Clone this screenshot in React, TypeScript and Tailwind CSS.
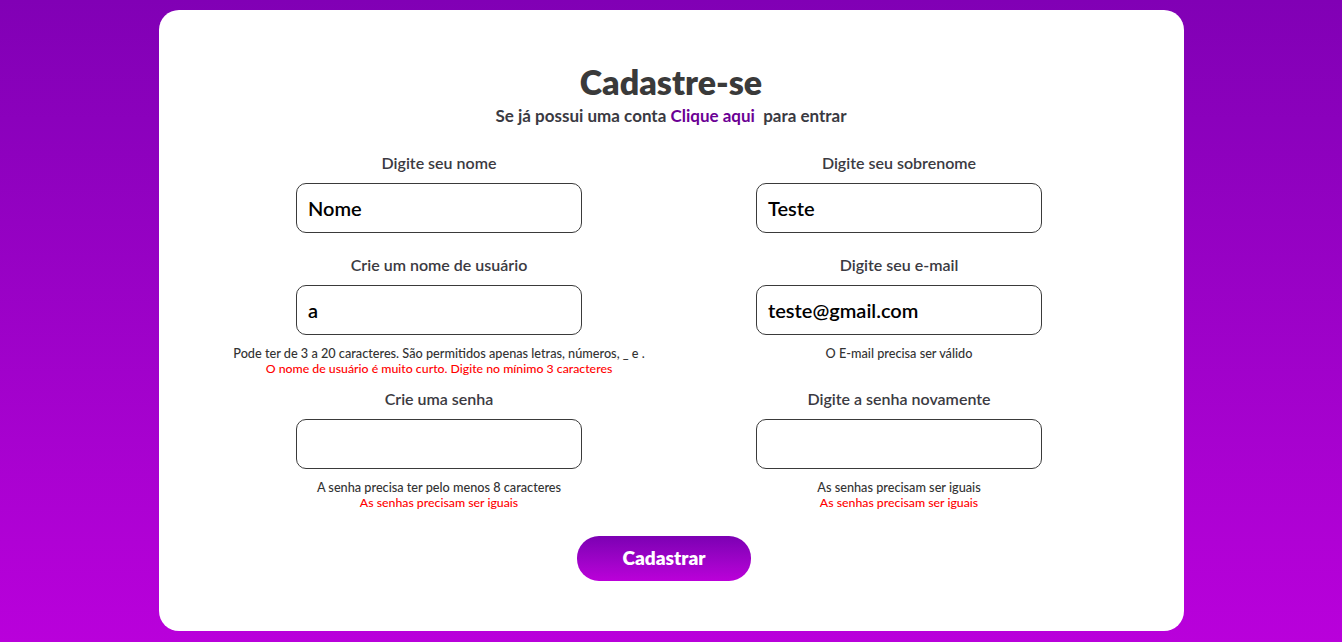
import type { ReactNode } from "react";

const font = { fontFamily: "Lato, 'Noto Sans', sans-serif" };

function Field({
  label,
  value,
  children,
}: {
  label: string;
  value: string;
  children?: ReactNode;
}) {
  return (
    <div className="flex flex-col items-center">
      <label className="h-5 text-[16px] font-semibold leading-5 text-[#3b3a42]">{label}</label>
      <div className="mt-[10px] flex h-[50px] w-[286px] items-center rounded-[10px] border border-[#3a3a3a] bg-white px-[11px] text-[20px] font-semibold text-black">
        {value}
      </div>
      {children && <div className="mt-[10px] flex flex-col items-center leading-4">{children}</div>}
    </div>
  );
}

export default function App() {
  return (
    <div
      className="flex min-h-[642px] w-full justify-center bg-gradient-to-b from-[#8100b5] to-[#b900db] pt-[10px] pb-[11px]"
      style={font}
    >
      <div className="flex w-[1025px] flex-col items-center rounded-[20px] bg-white pt-[52px] pb-[50px]">
        <h1 className="text-[34px] font-extrabold leading-10 text-[#3a3a3a]">Cadastre-se</h1>
        <p className="mt-1 text-[17px] font-bold leading-5 text-[#3a3a42]">
          Se já possui uma conta <span className="text-[#6b0095]">Clique aqui</span>&nbsp; para entrar
        </p>

        <div className="mt-[27px] grid w-[920px] -translate-x-[2px] grid-cols-2 gap-x-0">
          <Field label="Digite seu nome" value="Nome" />
          <Field label="Digite seu sobrenome" value="Teste" />

          <div className="mt-[22px]">
            <Field label="Crie um nome de usuário" value="a">
              <span className="text-[12.7px] font-medium text-[#333]">
                Pode ter de 3 a 20 caracteres. São permitidos apenas letras, números, _ e .
              </span>
              <span className="text-[12.3px] font-medium text-[#ff0000]">
                O nome de usuário é muito curto. Digite no mínimo 3 caracteres
              </span>
            </Field>
          </div>
          <div className="mt-[22px]">
            <Field label="Digite seu e-mail" value="teste@gmail.com">
              <span className="text-[12.7px] font-medium text-[#333]">O E-mail precisa ser válido</span>
            </Field>
          </div>

          <div className="mt-[12px]">
            <Field label="Crie uma senha" value="">
              <span className="text-[12.7px] font-medium text-[#333]">A senha precisa ter pelo menos 8 caracteres</span>
              <span className="text-[12.3px] font-medium text-[#ff0000]">As senhas precisam ser iguais</span>
            </Field>
          </div>
          <div className="mt-[12px]">
            <Field label="Digite a senha novamente" value="">
              <span className="text-[12.7px] font-medium text-[#333]">As senhas precisam ser iguais</span>
              <span className="text-[12.3px] font-medium text-[#ff0000]">As senhas precisam ser iguais</span>
            </Field>
          </div>
        </div>

        <button className="mt-[25px] h-[45px] w-[174px] -translate-x-[7px] rounded-[22px] bg-gradient-to-b from-[#7c00b3] to-[#bb00d9] text-[19px] font-extrabold text-white">
          Cadastrar
        </button>
      </div>
    </div>
  );
}
